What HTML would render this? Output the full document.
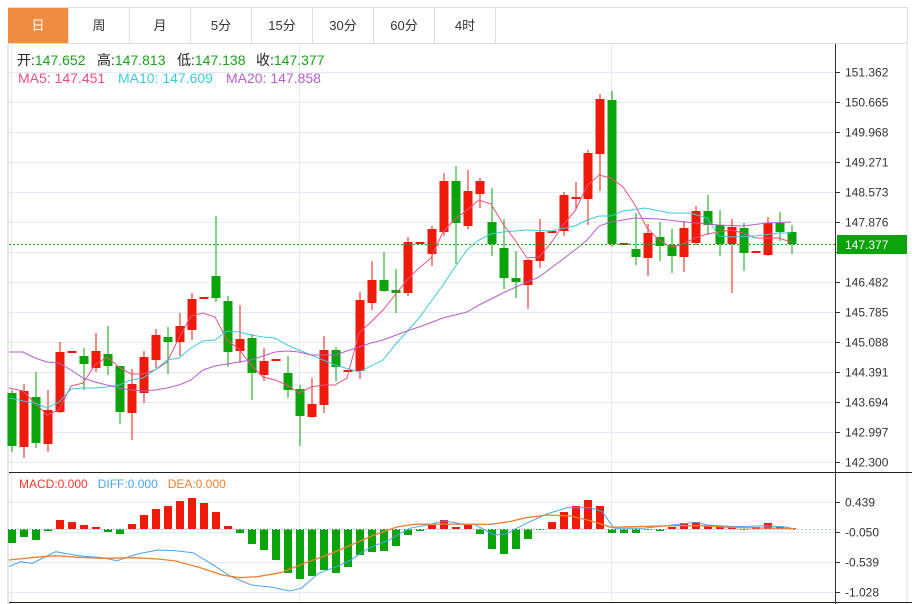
<!DOCTYPE html>
<html><head><meta charset="utf-8">
<style>
*{margin:0;padding:0;box-sizing:border-box}
body{width:912px;height:604px;background:#fff;position:relative;overflow:hidden;font-family:"Liberation Sans","Noto Sans CJK SC",sans-serif}
.tabs{position:absolute;left:8px;top:7px;height:37px;width:900px;border-top:1px solid #ddd;border-bottom:1px solid #ddd;border-right:1px solid #ddd}
.tab{position:absolute;top:0;height:35px;width:61px;border-right:1px solid #ddd;font-size:13px;color:#333;text-align:center;line-height:35px}
.tab.on{background:#f08c40;color:#fff}
.lg{position:absolute;font-size:14px;white-space:nowrap;line-height:16px}
svg{position:absolute;left:0;top:0}
</style></head><body>
<div class="tabs">
<div class="tab on" style="left:0">日</div>
<div class="tab" style="left:61px">周</div>
<div class="tab" style="left:122px">月</div>
<div class="tab" style="left:183px">5分</div>
<div class="tab" style="left:244px">15分</div>
<div class="tab" style="left:305px">30分</div>
<div class="tab" style="left:366px">60分</div>
<div class="tab" style="left:427px">4时</div>
</div>
<svg id="s" width="912" height="604" xmlns="http://www.w3.org/2000/svg"></svg>
<div class="lg" style="left:17px;top:52px;color:#222">开:<span style="color:#1aa01a">147.652</span></div>
<div class="lg" style="left:97px;top:52px;color:#222">高:<span style="color:#1aa01a">147.813</span></div>
<div class="lg" style="left:177px;top:52px;color:#222">低:<span style="color:#1aa01a">147.138</span></div>
<div class="lg" style="left:256px;top:52px;color:#222">收:<span style="color:#1aa01a">147.377</span></div>
<div class="lg" style="left:18px;top:70px;color:#ee4f7e">MA5: 147.451</div>
<div class="lg" style="left:118px;top:70px;color:#3cc8dc">MA10: 147.609</div>
<div class="lg" style="left:226px;top:70px;color:#b85dcc">MA20: 147.858</div>
<div class="lg" style="left:19px;top:476px;font-size:12px"><span style="color:#f23a2a">MACD:0.000</span>&nbsp;&nbsp; <span style="color:#4aa3f0">DIFF:0.000</span>&nbsp;&nbsp; <span style="color:#f07f2e">DEA:0.000</span></div>
<script>
var s=document.getElementById('s'),h='';
function L(x1,y1,x2,y2,c,w,extra){h+='<line x1="'+x1+'" y1="'+y1+'" x2="'+x2+'" y2="'+y2+'" stroke="'+c+'" stroke-width="'+(w||1)+'" '+(extra||'')+'/>';}
function R(x,y,w,hh,c){h+='<rect x="'+x+'" y="'+y+'" width="'+w+'" height="'+hh+'" fill="'+c+'"/>';}
function T(x,y,t,c,fs){h+='<text x="'+x+'" y="'+y+'" fill="'+c+'" font-size="'+(fs||12)+'" font-family="Liberation Sans,sans-serif">'+t+'</text>';}
function P(pts,c,w){h+='<polyline fill="none" stroke="'+c+'" stroke-width="'+(w||1)+'" points="'+pts.map(function(p){return p.join(',')}).join(' ')+'"/>';}
L(8,44,8,604,'#ddd',1.5);L(907,44,907,604,'#ddd',1);
L(8,43.5,907,43.5,'#ddd',1);
var lab=['151.362','150.665','149.968','149.271','148.573','147.876','147.179','146.482','145.785','145.088','144.391','143.694','142.997','142.300'];
for(var k=0;k<14;k++){var y=72+30*k+0.5;L(9,y,835,y,'#e3ebf2');L(835,y,840,y,'#333');if(k!=6)T(845,y+4,lab[k],'#333');}
var ml=['0.439','-0.050','-0.539','-1.028'];
for(k=0;k<4;k++){y=502+30*k+0.5;L(9,y,835,y,'#e3ebf2');L(835,y,840,y,'#333');T(845,y+4,ml[k],'#333');}
L(11.5,44,11.5,602,'#e3ebf2');L(299.5,44,299.5,602,'#e3ebf2');L(611.5,44,611.5,602,'#e3ebf2');
L(9,472.5,912,472.5,'#222');L(9,602.5,912,602.5,'#222');
L(835.5,44,835.5,604,'#333');
var G='#0aa30a',Rd='#f01a0a';
var c=[[393,446,390,452,G],[391,447,384,458,Rd],[397,443,372,448,G],[410,444,390,452,Rd],[352,412,342,413,Rd],[351,353,351,353,Rd],[356,364,348,390,G],[351,368,333,372,Rd],[354,366,326,375,G],[366,412,366,424,G],[384,413,369,440,Rd],[357,393,351,403,Rd],[335,360,329,368,Rd],[337,342,327,374,G],[326,342,313,356,Rd],[299,330,293,340,Rd],[297,299,297,299,Rd],[276,298,216,302,G],[301,352,296,367,G],[339,351,305,363,Rd],[338,373,334,400,G],[361,375,348,381,Rd],[359,361,359,361,Rd],[373,390,356,398,G],[389,416,385,446,G],
[404,417,378,418,Rd],[350,405,336,413,Rd],[350,367,347,381,G],[370,372,370,372,Rd],[300,371,292,379,Rd],[280,303,261,310,Rd],[280,291,252,292,G],[290,293,269,313,G],[242,293,237,296,Rd],[242,244,242,244,Rd],[229,254,226,266,Rd],[181,232,173,236,Rd],[181,223,166,264,G],[191,226,170,229,Rd],[181,194,178,208,Rd],[222,244,188,256,G],[248,278,219,289,G],[278,282,251,298,G],[260,285,259,309,Rd],[232,261,219,268,Rd],[231,233,231,233,Rd],[195,231,192,236,Rd],[197,199,182,210,Rd],[153,199,150,225,Rd],[99,154,94,191,Rd],[100,244,91,247,G],
[243,245,243,245,Rd],[249,257,213,265,G],[233,258,224,276,Rd],[237,246,222,261,G],[245,256,229,273,G],[228,257,221,272,Rd],[211,243,206,245,Rd],[211,225,195,235,G],[225,244,210,256,G],[227,244,219,293,Rd],[228,253,223,271,G],[251,253,251,253,Rd],[223,255,217,256,Rd],[223,232,212,241,G],[232,244,225,254,G]];
for(var i=0;i<c.length;i++){var x=12+12*i,d=c[i];L(x,d[2],x,d[3],d[4]);var bh=Math.max(d[1]-d[0],2);R(x-4.5,d[0],9,bh,d[4]);}
P([[9,388],[23,391],[35,403],[47,415],[59,410],[71,386],[83,383],[95,365],[107,357],[119,367],[131,374],[143,374],[155,370],[167,362],[179,338],[191,316],[203,313],[215,317],[227,340],[239,349],[251,365],[263,377],[275,380],[287,385],[299,393],[311,387],[323,385],[335,385],[347,378],[359,333],[371,322],[383,310],[395,295],[407,280],[419,268],[431,258],[443,232],[455,219],[467,210],[479,200],[491,204],[503,224],[515,240],[527,258],[539,257],[551,243],[563,225],[575,211],[587,186],[599,175],[611,178],[623,187],[635,205],[647,228],[659,240],[671,247],[683,244],[695,238],[707,234],[719,232],[731,230],[743,233],[755,238],[767,238],[779,238],[791,242]],'#ee4f7e');
P([[9,398],[23,401],[35,403],[47,408],[59,402],[71,389],[83,388],[95,388],[107,387],[119,385],[131,380],[143,378],[155,370],[167,360],[179,358],[191,348],[203,341],[215,340],[227,331],[239,332],[251,335],[263,337],[275,338],[287,345],[299,350],[311,355],[335,365],[359,372],[383,360],[395,345],[419,318],[443,285],[455,267],[467,250],[479,240],[491,234],[503,232],[527,230],[551,231],[575,226],[587,220],[599,216],[611,216],[623,211],[645,208],[670,213],[690,213],[707,218],[719,236],[731,237],[755,236],[779,233],[791,233]],'#3cc8dc');
P([[9,352],[23,352],[35,358],[47,362],[59,363],[71,370],[83,378],[95,382],[107,385],[119,388],[131,390],[143,391],[155,390],[167,388],[179,385],[191,380],[203,370],[215,366],[227,364],[239,362],[251,360],[263,356],[275,352],[287,351],[299,352],[311,355],[335,355],[347,351],[359,347],[371,343],[383,340],[407,331],[419,327],[443,318],[467,312],[479,305],[503,293],[527,282],[539,277],[551,268],[575,250],[587,240],[599,226],[611,222],[635,218],[659,219],[695,223],[719,225],[743,226],[767,223],[791,222]],'#b85dcc');
L(9,244.5,835,244.5,'#0aa30a',1,'stroke-dasharray="2,2"');
R(837,235,70,19,'#0aa30a');T(845,249,'147.377','#fff');
var m=[543,537,540,531,520,522,525,527,532,534,524,515,509,506,501,498,503,512,526,533,544,550,560,573,579,576,570,573,567,555,552,551,546,535,531,525,520,527,525,534,549,554,549,539,530,522,512,506,500,506,533,533,533,530,531,527,523,522,526,527,527,530,527,523,527,528];
var z=529;
for(i=0;i<m.length;i++){x=12+12*i;var v=m[i];if(v<z)R(x-4,v,8,z-v,Rd);else if(v>z)R(x-4,z,8,v-z,G);}
L(9,529.5,835,529.5,'#9fd8e8',1,'stroke-dasharray="2,2"');
function cv(a){return a.map(function(p){return [(p[0]/1.71).toFixed(1),(460+p[1]/3).toFixed(1)]});}
P(cv([[15,320],[35,305],[55,310],[95,275],[135,287],[175,293],[200,302],[235,282],[270,270],[300,272],[330,278],[360,310],[395,350],[430,375],[465,382],[495,393],[515,385],[545,340],[575,320],[600,300],[630,265],[665,240],[700,205],[730,195],[760,182],[790,192],[810,192],[845,225],[865,222],[900,190],[935,162],[970,143],[1010,143],[1030,155],[1050,205],[1100,205],[1150,195],[1190,187],[1210,195],[1260,200],[1310,197],[1340,200],[1360,207]]),'#4aa3f0');
P(cv([[15,300],[60,292],[95,287],[135,292],[175,295],[230,293],[270,297],[300,303],[340,322],[380,345],[410,353],[440,350],[480,338],[520,310],[560,285],[600,255],[640,225],[680,200],[710,193],[760,192],[800,193],[840,193],[870,185],[900,173],[935,165],[975,168],[1010,182],[1045,202],[1080,200],[1150,197],[1200,197],[1260,203],[1340,205],[1360,207]]),'#f07f2e',1.3);
s.innerHTML=h;
</script>
</body></html>
